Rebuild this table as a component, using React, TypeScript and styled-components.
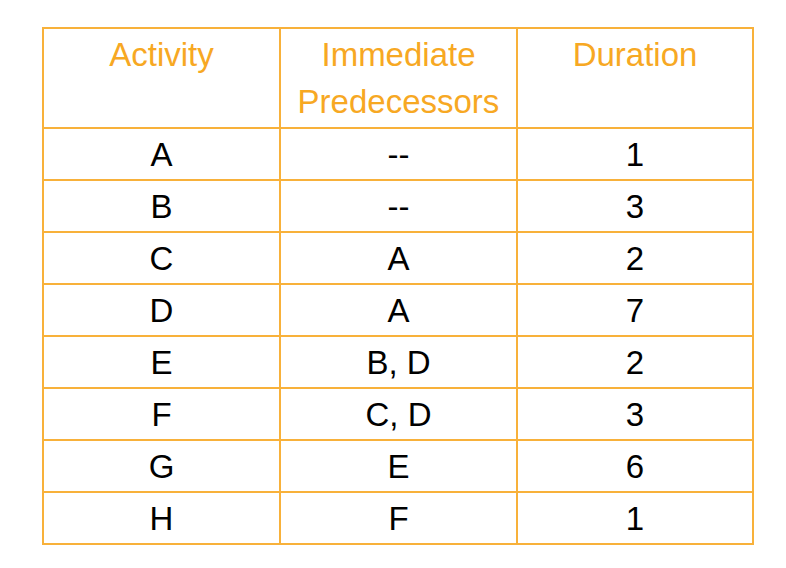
import React from "react";
import styled, { createGlobalStyle } from "styled-components";

const Global = createGlobalStyle`
  html, body { margin: 0; padding: 0; background: #ffffff; }
  body { font-family: "Liberation Sans", Arial, sans-serif; }
`;

const Page = styled.div`
  width: 786px;
  height: 568px;
  padding: 27px 0 0 42px;
  box-sizing: border-box;
  background: #ffffff;
`;

const Grid = styled.div`
  display: grid;
  grid-template-columns: 235px 235px 234px;
  grid-template-rows: 98px repeat(8, 50px);
  gap: 2px;
  padding: 2px;
  width: max-content;
  background: #f8b13a;
`;

const HeadCell = styled.div`
  background: #ffffff;
  color: #f7a823;
  font-size: 33px;
  line-height: 47px;
  text-align: center;
  padding-top: 2px;
  box-sizing: border-box;
`;

const Cell = styled.div`
  background: #ffffff;
  color: #000000;
  font-size: 33px;
  padding-top: 1px;
  box-sizing: border-box;
  display: flex;
  align-items: center;
  justify-content: center;
`;

const rows: [string, string, string][] = [
  ["A", "--", "1"],
  ["B", "--", "3"],
  ["C", "A", "2"],
  ["D", "A", "7"],
  ["E", "B, D", "2"],
  ["F", "C, D", "3"],
  ["G", "E", "6"],
  ["H", "F", "1"],
];

export default function App() {
  return (
    <Page>
      <Global />
      <Grid>
        <HeadCell>Activity</HeadCell>
        <HeadCell>
          Immediate
          <br />
          Predecessors
        </HeadCell>
        <HeadCell>Duration</HeadCell>
        {rows.map((r) =>
          r.map((v, i) => <Cell key={r[0] + i}>{v}</Cell>)
        )}
      </Grid>
    </Page>
  );
}
